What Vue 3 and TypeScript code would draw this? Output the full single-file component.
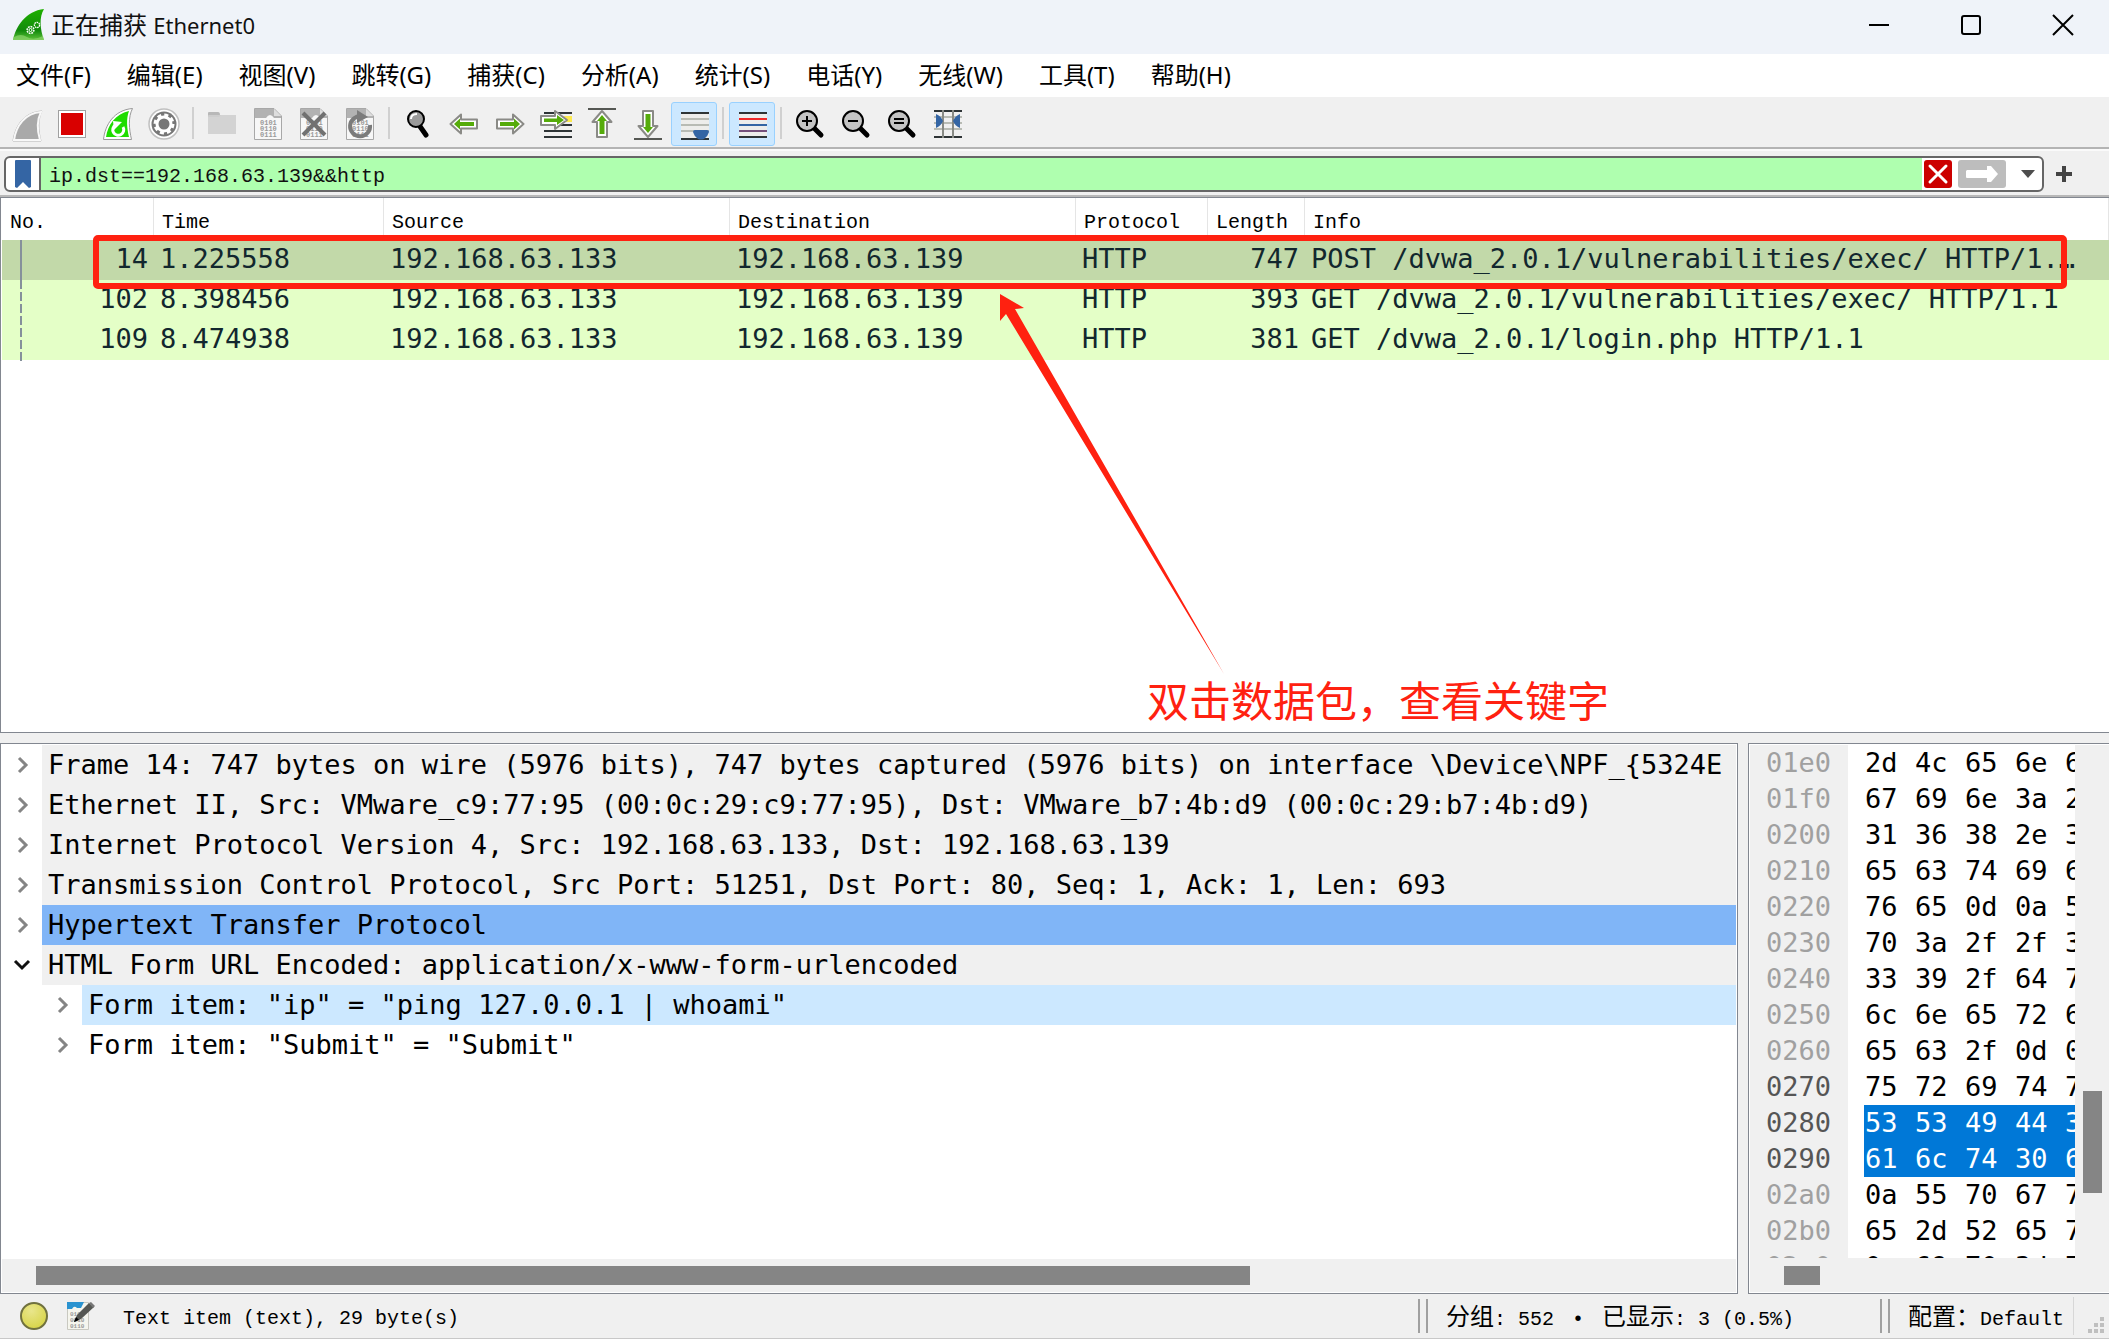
<script setup lang="ts">
import { ref } from 'vue'

interface Packet {
  no: number
  time: string
  source: string
  destination: string
  protocol: string
  length: number
  info: string
}

interface TreeRow {
  text: string
  level: number
  open?: boolean
  tone: 'plain' | 'header' | 'selected' | 'hover'
}

interface HexRow {
  offset: string
  bytes: string[]
  active?: boolean
  selected?: boolean
}

const menus = [
  '文件(F)', '编辑(E)', '视图(V)', '跳转(G)', '捕获(C)', '分析(A)',
  '统计(S)', '电话(Y)', '无线(W)', '工具(T)', '帮助(H)',
]

const filter = ref('ip.dst==192.168.63.139&&http')

const columns = ['No.', 'Time', 'Source', 'Destination', 'Protocol', 'Length', 'Info']

const packets: Packet[] = [
  { no: 14, time: '1.225558', source: '192.168.63.133', destination: '192.168.63.139', protocol: 'HTTP', length: 747, info: 'POST /dvwa_2.0.1/vulnerabilities/exec/ HTTP/1.…' },
  { no: 102, time: '8.398456', source: '192.168.63.133', destination: '192.168.63.139', protocol: 'HTTP', length: 393, info: 'GET /dvwa_2.0.1/vulnerabilities/exec/ HTTP/1.1' },
  { no: 109, time: '8.474938', source: '192.168.63.133', destination: '192.168.63.139', protocol: 'HTTP', length: 381, info: 'GET /dvwa_2.0.1/login.php HTTP/1.1' },
]
const selectedNo = ref(14)

const tree: TreeRow[] = [
  { text: 'Frame 14: 747 bytes on wire (5976 bits), 747 bytes captured (5976 bits) on interface \\Device\\NPF_{5324E', level: 0, tone: 'header' },
  { text: 'Ethernet II, Src: VMware_c9:77:95 (00:0c:29:c9:77:95), Dst: VMware_b7:4b:d9 (00:0c:29:b7:4b:d9)', level: 0, tone: 'header' },
  { text: 'Internet Protocol Version 4, Src: 192.168.63.133, Dst: 192.168.63.139', level: 0, tone: 'header' },
  { text: 'Transmission Control Protocol, Src Port: 51251, Dst Port: 80, Seq: 1, Ack: 1, Len: 693', level: 0, tone: 'header' },
  { text: 'Hypertext Transfer Protocol', level: 0, tone: 'selected' },
  { text: 'HTML Form URL Encoded: application/x-www-form-urlencoded', level: 0, open: true, tone: 'header' },
  { text: 'Form item: "ip" = "ping 127.0.0.1 | whoami"', level: 1, tone: 'hover' },
  { text: 'Form item: "Submit" = "Submit"', level: 1, tone: 'plain' },
]

const hex: HexRow[] = [
  { offset: '01e0', bytes: ['2d', '4c', '65', '6e', '67'] },
  { offset: '01f0', bytes: ['67', '69', '6e', '3a', '20'] },
  { offset: '0200', bytes: ['31', '36', '38', '2e', '36'] },
  { offset: '0210', bytes: ['65', '63', '74', '69', '6f'] },
  { offset: '0220', bytes: ['76', '65', '0d', '0a', '52'] },
  { offset: '0230', bytes: ['70', '3a', '2f', '2f', '31'] },
  { offset: '0240', bytes: ['33', '39', '2f', '64', '76'] },
  { offset: '0250', bytes: ['6c', '6e', '65', '72', '61'] },
  { offset: '0260', bytes: ['65', '63', '2f', '0d', '0a'] },
  { offset: '0270', bytes: ['75', '72', '69', '74', '79'], active: true },
  { offset: '0280', bytes: ['53', '53', '49', '44', '3d'], active: true, selected: true },
  { offset: '0290', bytes: ['61', '6c', '74', '30', '62'], active: true, selected: true },
  { offset: '02a0', bytes: ['0a', '55', '70', '67', '72'] },
  { offset: '02b0', bytes: ['65', '2d', '52', '65', '71'] },
  { offset: '02c0', bytes: ['0a', '69', '70', '3d', '70'] },
]
</script>

<template>
  <div class="window">
    <header class="titlebar">
      <svg class="app-icon" viewBox="0 0 32 32" aria-hidden="true">
        <defs>
          <linearGradient id="fin" x1="0" y1="0" x2="0" y2="1">
            <stop offset="0" stop-color="#1fb000" />
            <stop offset="0.7" stop-color="#128a0c" />
            <stop offset="1" stop-color="#5fc33c" />
          </linearGradient>
        </defs>
        <path d="M0 31 C3 17 13 2 31 0 C26 8 27 20 31 31 Z" fill="url(#fin)" />
        <path d="M1 28 Q8 24 14 28 T30 27 L31 31 H0 Z" fill="#8bd36c" opacity="0.7" />
        <circle cx="17.500" cy="21" r="3.400" fill="none" stroke="#fff" stroke-width="1.500" stroke-dasharray="1.800 0.800" />
        <circle cx="17.500" cy="21" r="1.500" fill="none" stroke="#fff" />
        <circle cx="24" cy="16" r="2.600" fill="none" stroke="#fff" stroke-width="1.300" stroke-dasharray="1.600 0.700" />
      </svg>
      <h1 class="title">正在捕获 <span class="title-latin">Ethernet0</span></h1>
      <div class="controls">
        <button type="button" aria-label="最小化">
          <svg viewBox="0 0 22 22"><path d="M1 11 H21" stroke="#000" stroke-width="2" /></svg>
        </button>
        <button type="button" aria-label="最大化">
          <svg viewBox="0 0 22 22"><rect x="2" y="2" width="18" height="18" rx="2" fill="none" stroke="#000" stroke-width="2" /></svg>
        </button>
        <button type="button" aria-label="关闭">
          <svg viewBox="0 0 22 22"><path d="M1 1 L21 21 M21 1 L1 21" stroke="#000" stroke-width="2" /></svg>
        </button>
      </div>
    </header>

    <nav class="menubar">
      <button v-for="m in menus" :key="m" type="button">{{ m }}</button>
    </nav>

    <div class="toolbar" role="toolbar">
      <button type="button" aria-label="开始捕获">
        <svg viewBox="0 0 32 32">
          <path d="M3 33 C5 18 14 4 32 3 C28 11 28 22 31 33 Z" fill="#a9a9a9" stroke="#b4b4b4" stroke-width="1" />
          <path d="M4 32 C6 18 15 5 31 4 C27 12 27 22 30 32 Z" fill="#a9a9a9" stroke="#f8f8f8" stroke-width="2" />
        </svg>
      </button>
      <button type="button" aria-label="停止捕获">
        <svg viewBox="0 0 32 32">
          <rect x="2.500" y="2.500" width="27" height="27" fill="#fff" stroke="#a0a0a0" />
          <rect x="5" y="5" width="22" height="22" fill="#d90000" />
        </svg>
      </button>
      <button type="button" aria-label="重新开始捕获">
        <svg viewBox="0 0 32 32">
          <path d="M1.500 31.500 C3 17 12 2 30.500 0.500 C26 9 27 21 29.500 31.500 Z" fill="#fff" stroke="#999" />
          <path d="M4 29 C6 17 13 6 27 3 C24 11 25 20 27 29 Z" fill="#1fdc00" />
          <path d="M13.500 17 A5.500 5.500 0 1 0 21 19" fill="none" stroke="#fff" stroke-width="3" />
          <path d="M11 13 L20 14 L12 22 Z" fill="#fff" />
        </svg>
      </button>
      <button type="button" aria-label="捕获选项">
        <svg viewBox="0 0 32 32">
          <circle cx="16" cy="16" r="15" fill="#fff" stroke="#c0c0c0" stroke-width="1.500" />
          <circle cx="16" cy="16" r="12.500" fill="#777" />
          <circle cx="16" cy="16" r="9" fill="none" stroke="#fff" stroke-width="3" stroke-dasharray="4 3.070" />
          <circle cx="16" cy="16" r="7" fill="none" stroke="#fff" stroke-width="3" />
        </svg>
      </button>
      <span class="sep"></span>
      <button type="button" aria-label="打开">
        <svg viewBox="0 0 32 32">
          <path d="M2 5 Q2 4 3 4 H12 Q14 4 14 7 V9 H2 Z" fill="#b8b8b8" />
          <rect x="2" y="7" width="28" height="19" rx="1" fill="#cdcdcd" />
          <path d="M2 9 H13 L15 7 H30 V25 Q30 26 29 26 H3 Q2 26 2 25 Z" fill="#d3d3d3" />
        </svg>
      </button>
      <button v-for="kind in ['save', 'close', 'reload']" :key="kind" type="button" :aria-label="kind">
        <svg viewBox="0 0 32 32">
          <path d="M2.500 0.500 H22 L29.500 8 V31.500 H2.500 Z" fill="#f7f7f7" stroke="#a8a8a8" />
          <path d="M3 1 H22 L29 8 V10 H22 Q18 4 14 10 H3 Z" fill="#b2b2b2" />
          <path d="M22 1 V8 H29 Z" fill="#dedede" />
          <g class="bits">
            <text x="8" y="17">0101</text>
            <text x="8" y="23">0110</text>
            <text x="8" y="29">0111</text>
          </g>
          <path v-if="kind === 'close'" d="M5 5 L27 27 M27 5 L5 27" stroke="#717171" stroke-width="4" />
          <template v-if="kind === 'reload'">
            <path d="M18 8.500 A10 10 0 1 0 26 17" fill="none" stroke="#7b7b7b" stroke-width="4" />
            <path d="M13 2 L24 9 L13 15 Z" fill="#7b7b7b" />
          </template>
        </svg>
      </button>
      <span class="sep"></span>
      <button type="button" aria-label="查找">
        <svg viewBox="0 0 32 32">
          <path d="M17 17 L24 27" stroke="#000" stroke-width="5" stroke-linecap="round" />
          <circle cx="14" cy="11" r="8" fill="#9a9a9a" stroke="#000" stroke-width="2" />
          <path d="M9 11 Q9 6 15 6" fill="none" stroke="#fff" stroke-width="2" />
        </svg>
      </button>
      <button v-for="dir in ['left', 'right']" :key="dir" type="button" :aria-label="dir">
        <svg viewBox="0 0 32 32" :class="{ flip: dir === 'right' }">
          <path d="M2.500 16 L13 6.500 V11.500 H29 V20.500 H13 V25.500 Z" fill="#fff" stroke="#8a8a86" stroke-width="2" stroke-linejoin="round" />
          <path d="M6 16 L12 10.500 V14 H26 V18 H12 V21.500 Z" fill="#55ab0a" />
        </svg>
      </button>
      <button type="button" aria-label="转到分组">
        <svg viewBox="0 0 32 32">
          <path d="M4 5 H32 M4 17 H32 M4 23 H32 M4 29 H32" stroke="#2e3436" stroke-width="2" />
          <path d="M24 11 H32" stroke="#fce94f" stroke-width="6" />
          <path d="M1 8 H15 V3 L27 12 L15 21 V17 H1 Z" fill="#fff" stroke="#8a8a86" stroke-width="2" stroke-linejoin="round" />
          <path d="M4 10.500 H17 V7 L24 12 L17 17 V14 H4 Z" fill="#55ab0a" />
        </svg>
      </button>
      <button type="button" aria-label="首个分组">
        <svg viewBox="0 0 32 32">
          <path d="M2 1 H30" stroke="#555753" stroke-width="2" />
          <path d="M16 3 L25.500 14 H21 V29 H11 V14 H6.500 Z" fill="#fff" stroke="#8a8a86" stroke-width="2" stroke-linejoin="round" />
          <path d="M16 7 L21 13 H18.500 V26 H13.500 V13 H11 Z" fill="#55ab0a" />
        </svg>
      </button>
      <button type="button" aria-label="最新分组">
        <svg viewBox="0 0 32 32">
          <path d="M2 31 H30" stroke="#555753" stroke-width="2" />
          <path d="M16 29 L25.500 18 H21 V3 H11 V18 H6.500 Z" fill="#fff" stroke="#8a8a86" stroke-width="2" stroke-linejoin="round" />
          <path d="M16 25 L21 19 H18.500 V6 H13.500 V19 H11 Z" fill="#55ab0a" />
        </svg>
      </button>
      <button type="button" class="on" aria-pressed="true" aria-label="自动滚屏">
        <svg viewBox="0 0 32 32">
          <rect x="3" y="4" width="28" height="26" fill="#ededeb" />
          <path d="M3 5 H31 M3 31 H31" stroke="#2e3436" stroke-width="2" />
          <path d="M3 11 H31 M3 17 H31 M3 23 H31" stroke="#b8bbb4" stroke-width="2" />
          <path d="M15 24 Q15 22 17 22 H29 Q31 22 31 24 Q30 28 26 31 Q23 32 20 31 Q16 28 15 24 Z" fill="#3465a4" />
        </svg>
      </button>
      <span class="sep"></span>
      <button type="button" class="on" aria-pressed="true" aria-label="着色">
        <svg viewBox="0 0 32 32">
          <rect x="3" y="4" width="28" height="26" fill="#ededeb" />
          <path d="M3 5 H31 M3 29 H31" stroke="#2e3436" stroke-width="2" />
          <path d="M3 11 H31" stroke="#ef2929" stroke-width="2" />
          <path d="M3 17 H31" stroke="#3465a4" stroke-width="2" />
          <path d="M3 23 H31" stroke="#75507b" stroke-width="2" />
        </svg>
      </button>
      <span class="sep"></span>
      <button v-for="z in ['in', 'out', 'reset']" :key="z" type="button" :aria-label="'zoom ' + z">
        <svg viewBox="0 0 32 32">
          <path d="M20 20 L27 27" stroke="#000" stroke-width="5" stroke-linecap="round" />
          <circle cx="13" cy="13" r="10" fill="#c4c4c4" stroke="#000" stroke-width="2" />
          <path v-if="z === 'in'" d="M8 13 H18 M13 8 V18" stroke="#000" stroke-width="2" />
          <path v-if="z === 'out'" d="M8 13 H18" stroke="#000" stroke-width="2" />
          <path v-if="z === 'reset'" d="M8 11 H18 M8 15 H18" stroke="#000" stroke-width="2" />
        </svg>
      </button>
      <button type="button" aria-label="调整列宽">
        <svg viewBox="0 0 32 32">
          <path d="M2 3 H30 M2 29 H30" stroke="#2e3436" stroke-width="2" />
          <path d="M2 9 H30 M2 15 H30 M2 21 H30" stroke="#b8bbb4" stroke-width="2" />
          <path d="M11 2 V30 M21 2 V30" stroke="#888a85" stroke-width="2" />
          <path d="M4 6 Q9 8 11 13 Q9 18 4 20 Z M28 6 Q23 8 21 13 Q23 18 28 20 Z" fill="#3465a4" />
        </svg>
      </button>
    </div>

    <div class="filterbar">
      <div class="filter">
        <button type="button" class="bookmark" aria-label="书签">
          <svg viewBox="0 0 16 28"><path d="M0 1 Q0 0 1 0 H15 Q16 0 16 1 V27 L14 28 L8 22 L2 28 L0 27 Z" fill="#3465a4" /></svg>
        </button>
        <input v-model="filter" type="text" aria-label="显示过滤器" spellcheck="false" />
        <button type="button" class="clear" aria-label="清除">
          <svg viewBox="0 0 28 28">
            <rect width="28" height="28" rx="3" fill="#cc0000" />
            <path d="M6 6 L22 22 M22 6 L6 22" stroke="#fff" stroke-width="3" stroke-linecap="round" />
          </svg>
        </button>
        <button type="button" class="apply" aria-label="应用">
          <svg viewBox="0 0 48 28">
            <rect width="48" height="28" rx="3" fill="#bdbdbd" />
            <path d="M9 10 H29 V6 L33 6 L40 14 L33 22 H29 V18 H9 Q8 18 8 17 V11 Z" fill="#fff" />
          </svg>
        </button>
        <button type="button" class="history" aria-label="历史">
          <svg viewBox="0 0 14 8"><path d="M0 0 H14 L7 8 Z" fill="#4d4d4d" /></svg>
        </button>
      </div>
      <button type="button" class="add" aria-label="添加过滤按钮">
        <svg viewBox="0 0 16 16"><path d="M0 8 H16 M8 0 V16" stroke="#444" stroke-width="4" /></svg>
      </button>
    </div>

    <main class="panes">
      <section class="pane packets">
        <table>
          <colgroup>
            <col class="c-no" /><col class="c-time" /><col class="c-addr" /><col class="c-addr" />
            <col class="c-proto" /><col class="c-len" /><col />
          </colgroup>
          <thead>
            <tr><th v-for="c in columns" :key="c" scope="col">{{ c }}</th></tr>
          </thead>
          <tbody>
            <tr v-for="p in packets" :key="p.no" :class="{ selected: p.no === selectedNo }" @click="selectedNo = p.no">
              <td class="num">{{ p.no }}</td>
              <td>{{ p.time }}</td>
              <td>{{ p.source }}</td>
              <td>{{ p.destination }}</td>
              <td>{{ p.protocol }}</td>
              <td class="num">{{ p.length }}</td>
              <td>{{ p.info }}</td>
            </tr>
          </tbody>
        </table>
        <svg class="related" viewBox="0 0 2 122" aria-hidden="true">
          <path d="M1 0 V49" stroke="#85909b" stroke-width="2" />
          <path d="M1 52 V122" stroke="#85909b" stroke-width="2" stroke-dasharray="9 3" />
        </svg>
        <div class="mark-box"></div>
        <svg class="mark-arrow" viewBox="0 0 224 380" aria-hidden="true">
          <path d="M0 0 L24 14 L15 15 L224 380 L6 20 L0 27 Z" fill="#ff2110" />
        </svg>
        <p class="mark-text">双击数据包，查看关键字</p>
      </section>

      <div class="lower">
        <section class="pane details">
          <ul class="tree">
            <li v-for="r in tree" :key="r.text" :class="['lvl' + r.level, r.tone]">
              <button type="button" class="expander" :aria-expanded="!!r.open" :aria-label="r.open ? '折叠' : '展开'">
                <svg v-if="r.open" viewBox="0 0 20 20"><path d="M3 6 L10 13 L17 6" fill="none" stroke="#111" stroke-width="3" /></svg>
                <svg v-else viewBox="0 0 20 20"><path d="M7 3 L14 10 L7 17" fill="none" stroke="#858585" stroke-width="3" /></svg>
              </button>
              <span class="label">{{ r.text }}</span>
            </li>
          </ul>
          <div class="hbar"><div class="thumb"></div></div>
        </section>

        <section class="pane bytes">
          <div class="hexview">
            <div v-for="r in hex" :key="r.offset" class="hexrow">
              <span class="offset" :class="{ active: r.active }">{{ r.offset }}</span>
              <span class="data" :class="{ selected: r.selected }">
                <span v-for="(b, i) in r.bytes" :key="i" class="byte">{{ b }}</span>
              </span>
            </div>
          </div>
          <div class="vbar"><div class="thumb"></div></div>
          <div class="hbar"><div class="thumb"></div></div>
        </section>
      </div>
    </main>

    <footer class="status">
      <button type="button" class="expert" aria-label="专家信息">
        <svg viewBox="0 0 28 28">
          <defs>
            <radialGradient id="led" cx="0.4" cy="0.3" r="0.8">
              <stop offset="0" stop-color="#e9e68c" />
              <stop offset="1" stop-color="#d5d240" />
            </radialGradient>
          </defs>
          <circle cx="14" cy="14" r="13" fill="url(#led)" stroke="#70713f" stroke-width="2" />
        </svg>
      </button>
      <button type="button" class="note" aria-label="捕获注释">
        <svg viewBox="0 0 28 28">
          <path d="M0.500 0.500 H21.500 V27.500 H0.500 Z" fill="#f5f5ee" stroke="#c8c8c0" />
          <path d="M0 0 H17 L14 6 H10 Q7 3 5 7 H0 Z" fill="#2a93d0" />
          <g class="bits note-bits">
            <text x="3" y="14">0101</text>
            <text x="3" y="20">0010</text>
            <text x="3" y="26">0110</text>
          </g>
          <path d="M10 13 L22 1 L27 5 L14 17 L7 20 Z" fill="#555753" />
          <path d="M7 20 L9 15 L12 18 Z" fill="#000" />
          <path d="M22 1 L24 0 L28 4 L26 6 Z" fill="#777" />
        </svg>
      </button>
      <span class="msg">Text item (text), 29 byte(s)</span>
      <span class="grip"></span>
      <span class="counts"><span class="zh">分组</span>: 552 <span class="dot">•</span> <span class="zh">已显示</span>: 3 (0.5%)</span>
      <span class="grip"></span>
      <span class="profile"><span class="zh">配置：</span>Default</span>
      <svg class="resize" viewBox="0 0 16 16" aria-hidden="true">
        <path d="M12 0 h4 v4 h-4 Z M6 6 h4 v4 h-4 Z M12 6 h4 v4 h-4 Z M0 12 h4 v4 h-4 Z M6 12 h4 v4 h-4 Z M12 12 h4 v4 h-4 Z" fill="#bfbfbf" />
      </svg>
    </footer>
  </div>
</template>

<style>
body {
  margin: 0;
}
</style>

<style scoped>
.window {
  display: flex;
  flex-direction: column;
  height: 100vh;
  overflow: hidden;
  background: #f0f0f0;
  color: #000;
  font: 24px/32px "Noto Sans", "Noto Sans CJK SC", sans-serif;
}

.window *,
.window {
  box-sizing: border-box;
}

button {
  display: flex;
  align-items: center;
  justify-content: center;
  padding: 0;
  border: 0;
  background: none;
  color: inherit;
  font: inherit;
}

svg {
  display: block;
  flex: none;
}

/* title bar */
.titlebar {
  display: flex;
  flex: none;
  align-items: center;
  height: 54px;
  padding: 0 0 4px 13px;
  background: #eff3f9;
}

.app-icon {
  width: 32px;
  height: 32px;
}

.title {
  flex: 1;
  margin: 0 0 0 6px;
  color: #111;
  font-size: 24px;
  font-weight: 400;
}

.title-latin {
  font-size: 22px;
}

.controls {
  display: flex;
  height: 100%;
}

.controls button {
  width: 92px;
}

.controls svg {
  width: 22px;
  height: 22px;
}

/* menu */
.menubar {
  display: flex;
  flex: none;
  gap: 4px;
  height: 45px;
  border-bottom: 2px solid #f0f0f0;
  background: #fff;
}

.menubar button {
  padding: 0 16px 2px;
}

/* toolbar */
.toolbar {
  display: flex;
  flex: none;
  align-items: flex-start;
  height: 52px;
  padding: 3px 3px 0;
  border-bottom: 2px solid #fafafa;
  background: #f0f0f0;
  box-shadow: inset 0 -2px #b4b4b4;
}

.toolbar button {
  width: 46px;
  height: 44px;
  border: 1px solid transparent;
  border-radius: 3px;
}

.toolbar button.on {
  border-color: #99d1ff;
  background: #cce8ff;
}

.toolbar svg {
  width: 32px;
  height: 32px;
  overflow: visible;
}

.toolbar svg.flip {
  transform: scaleX(-1);
}

.sep {
  width: 2px;
  height: 32px;
  margin: 5px 5px 0;
  background: #d0d0d0;
}

.bits {
  fill: #9a9a9a;
  font: bold 7px "Liberation Mono", monospace;
}

/* filter */
.filterbar {
  display: flex;
  flex: none;
  align-items: center;
  height: 46px;
  padding: 2px 37px 0 4px;
  border-bottom: 2px solid #b8b8b8;
}

.filter {
  display: flex;
  flex: 1;
  align-items: center;
  height: 36px;
  overflow: hidden;
  border: 2px solid #666;
  border-radius: 6px;
  background: #fff;
}

.bookmark {
  width: 35px;
  height: 32px;
  border-right: 2px solid #666;
}

.bookmark svg {
  width: 16px;
  height: 28px;
}

.filter input {
  flex: 1;
  min-width: 0;
  height: 32px;
  padding: 4px 8px 0;
  border: 0;
  outline: 0;
  border-radius: 0;
  background: #afffaf;
  color: #111;
  font: 20px/28px "Liberation Mono", monospace;
}

.clear,
.clear svg {
  width: 28px;
  height: 28px;
}

.clear {
  margin: 0 6px 0 2px;
}

.apply svg {
  width: 48px;
  height: 28px;
}

.history {
  width: 36px;
  padding-left: 8px;
}

.history svg {
  width: 14px;
  height: 8px;
}

.add {
  margin-left: 12px;
}

.add svg {
  width: 16px;
  height: 16px;
}

/* panes */
.panes {
  display: flex;
  flex: 1;
  flex-direction: column;
  gap: 10px;
  min-height: 0;
}

.pane {
  border: 1px solid #828790;
  background: #fff;
}

.packets {
  position: relative;
  flex: 535 1 0;
  min-height: 0;
  padding-left: 1px;
  border-right: 0;
}

table {
  width: 100%;
  border-collapse: separate;
  border-spacing: 0;
  table-layout: fixed;
}

.c-no { width: 152px; }
.c-time { width: 230px; }
.c-addr { width: 346px; }
.c-proto { width: 132px; }
.c-len { width: 97px; }

th {
  height: 42px;
  padding: 8px 8px 0;
  border-right: 1px solid #e5e5e5;
  font: 20px/34px "Liberation Mono", monospace;
  text-align: left;
}

td {
  height: 40px;
  padding: 0 6px 2px;
  overflow: hidden;
  background: #e4ffc7;
  color: #12272e;
  font: 27px/38px "DejaVu Sans Mono", monospace;
  white-space: nowrap;
}

.num {
  text-align: right;
}

tr.selected td {
  background: #c2d9a9;
}

.related {
  position: absolute;
  top: 42px;
  left: 19px;
  width: 2px;
  height: 122px;
}

.mark-box {
  position: absolute;
  top: 37px;
  left: 92px;
  right: 42px;
  height: 54px;
  border: 6px solid #ff2110;
  border-radius: 5px;
}

.mark-arrow {
  position: absolute;
  top: 96px;
  left: 999px;
  width: 224px;
  height: 380px;
}

.mark-text {
  position: absolute;
  top: 475px;
  left: 1146px;
  margin: 0;
  color: #ff2110;
  font: 42px/52px "Noto Sans CJK SC", sans-serif;
  white-space: nowrap;
}

.lower {
  display: flex;
  flex: 552 1 0;
  gap: 10px;
  min-height: 0;
}

.details {
  display: flex;
  flex: 1;
  flex-direction: column;
  min-width: 0;
  padding: 1px;
}

.tree {
  flex: 1;
  min-height: 0;
  margin: 0;
  padding: 0;
  overflow: hidden;
  list-style: none;
}

.tree li {
  display: flex;
  height: 40px;
  font: 27px/40px "DejaVu Sans Mono", monospace;
}

.tree .lvl1 {
  padding-left: 40px;
}

.expander {
  flex: none;
  width: 40px;
}

.expander svg {
  width: 20px;
  height: 20px;
}

.label {
  flex: 1;
  min-width: 0;
  padding-left: 6px;
  overflow: hidden;
  white-space: pre;
}

.header .label { background: #f0f0f0; }
.selected .label { background: #80b5f7; }
.hover .label { background: #cce8ff; }

.hbar {
  flex: none;
  height: 33px;
  padding-top: 7px;
  background: #f0f0f0;
}

.thumb {
  background: #858585;
}

.hbar .thumb {
  height: 19px;
}

.details .thumb {
  width: 70%;
  margin-left: 34px;
}

.bytes {
  display: grid;
  flex: none;
  grid-template: minmax(0, 1fr) 34px / minmax(0, 1fr) 34px;
  width: 361px;
  padding: 1px 0 1px 1px;
  border-right: 0;
}

.hexview {
  overflow: hidden;
  background: linear-gradient(to right, #f0f0f0 98px, #fff 98px);
}

.hexrow {
  display: flex;
  height: 36px;
  font: 27px/36px "DejaVu Sans Mono", monospace;
}

.offset {
  flex: none;
  width: 98px;
  padding-left: 16px;
  color: #a0a0a0;
}

.offset.active {
  color: #555;
}

.data {
  display: flex;
  flex: none;
  margin-left: 16px;
  padding-left: 1px;
}

.data.selected {
  background: #0078d7;
  color: #fff;
}

.byte {
  width: 50px;
}

.vbar {
  padding: 346px 7px 0 8px;
  background: #f0f0f0;
}

.vbar .thumb {
  height: 102px;
}

.bytes .hbar {
  grid-column: 1 / 3;
  height: 34px;
  padding-top: 8px;
}

.bytes .hbar .thumb {
  width: 36px;
  margin-left: 34px;
}

/* status bar */
.status {
  display: flex;
  flex: none;
  align-items: center;
  height: 45px;
  padding: 0 5px 0 20px;
  border-bottom: 1px solid #c8c8c8;
  font: 20px/32px "Liberation Mono", "Noto Sans CJK SC", monospace;
  white-space: pre;
}

.status button svg {
  width: 28px;
  height: 28px;
}

.note {
  margin-left: 19px;
}

.note-bits {
  font-size: 6px;
}

.msg,
.counts {
  padding-top: 6px;
}

.msg {
  flex: 1;
  margin-left: 28px;
}

.grip {
  width: 10px;
  height: 34px;
  border: solid #a0a0a0;
  border-width: 0 2px;
}

.counts {
  width: 434px;
  margin: 0 0 0 18px;
}

.zh {
  font-size: 24px;
}

.dot {
  display: inline-block;
  width: 24px;
  text-align: center;
}

.profile {
  width: 184px;
  height: 38px;
  padding-left: 18px;
  border-right: 1px solid #d7d7d7;
  line-height: 44px;
}

.resize {
  align-self: flex-end;
  width: 16px;
  height: 16px;
  margin: 0 0 5px 14px;
}
</style>
